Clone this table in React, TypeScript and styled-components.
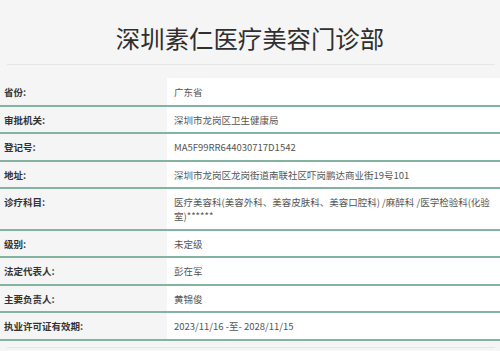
import React from "react";
import styled, { createGlobalStyle } from "styled-components";

type InfoRow = {
  label: string;
  value: string;
};

const rows: InfoRow[] = [
  { label: "省份:", value: "广东省" },
  { label: "审批机关:", value: "深圳市龙岗区卫生健康局" },
  { label: "登记号:", value: "MA5F99RR644030717D1542" },
  { label: "地址:", value: "深圳市龙岗区龙岗街道南联社区吓岗鹏达商业街19号101" },
  {
    label: "诊疗科目:",
    value: "医疗美容科(美容外科、美容皮肤科、美容口腔科) /麻醉科 /医学检验科(化验室)******",
  },
  { label: "级别:", value: "未定级" },
  { label: "法定代表人:", value: "彭在军" },
  { label: "主要负责人:", value: "黄锦俊" },
  { label: "执业许可证有效期:", value: "2023/11/16 -至- 2028/11/15" },
];

const App: React.FC = () => {
  return (
    <>
      <GlobalStyle />
      <Page>
        <Title>深圳素仁医疗美容门诊部</Title>
        <Divider />
        <Table>
          {rows.map((row) => (
            <Row key={row.label}>
              <Label>{row.label}</Label>
              <Value>{row.value}</Value>
            </Row>
          ))}
        </Table>
        <Divider />
      </Page>
    </>
  );
};

export default App;

const GlobalStyle = createGlobalStyle`
    html, body {
        margin: 0;
        padding: 0;
        background: #f5f5f5;
    }
    body {
        font-family: "Microsoft YaHei", "Noto Sans CJK SC", "Noto Sans", sans-serif;
    }
`;

const Page = styled.div`
    width: 500px;
    height: 351px;
    overflow: hidden;
    background: #f5f5f5;
`;

const Title = styled.h1`
    margin: 0;
    padding: 22px 0 0;
    height: 42px;
    text-align: center;
    font-size: 24.4px;
    line-height: 32px;
    font-weight: 400;
    color: #2f2f2f;
`;

const Divider = styled.div`
    height: 1px;
    margin: 0 5px 0 7px;
    background: #e6e6e6;
`;

const Table = styled.div`
    margin: 13px 0 6px;
    display: flex;
    flex-direction: column;
`;

const Row = styled.div`
    display: flex;
    align-items: stretch;
    border-bottom: 2px solid #84b3a2;

    &:first-child > div {
        padding-top: 7px;
    }
`;

const Label = styled.div`
    width: 167px;
    flex-shrink: 0;
    box-sizing: border-box;
    padding: 5.75px 0 5.75px 4px;
    font-size: 9.5px;
    line-height: 14px;
    font-weight: 700;
    color: #333;
`;

const Value = styled.div`
    flex: 1;
    background: #fff;
    padding: 5.75px 6px 5.75px 7px;
    font-size: 9.5px;
    line-height: 14px;
    color: #555;
    word-break: break-all;
`;
